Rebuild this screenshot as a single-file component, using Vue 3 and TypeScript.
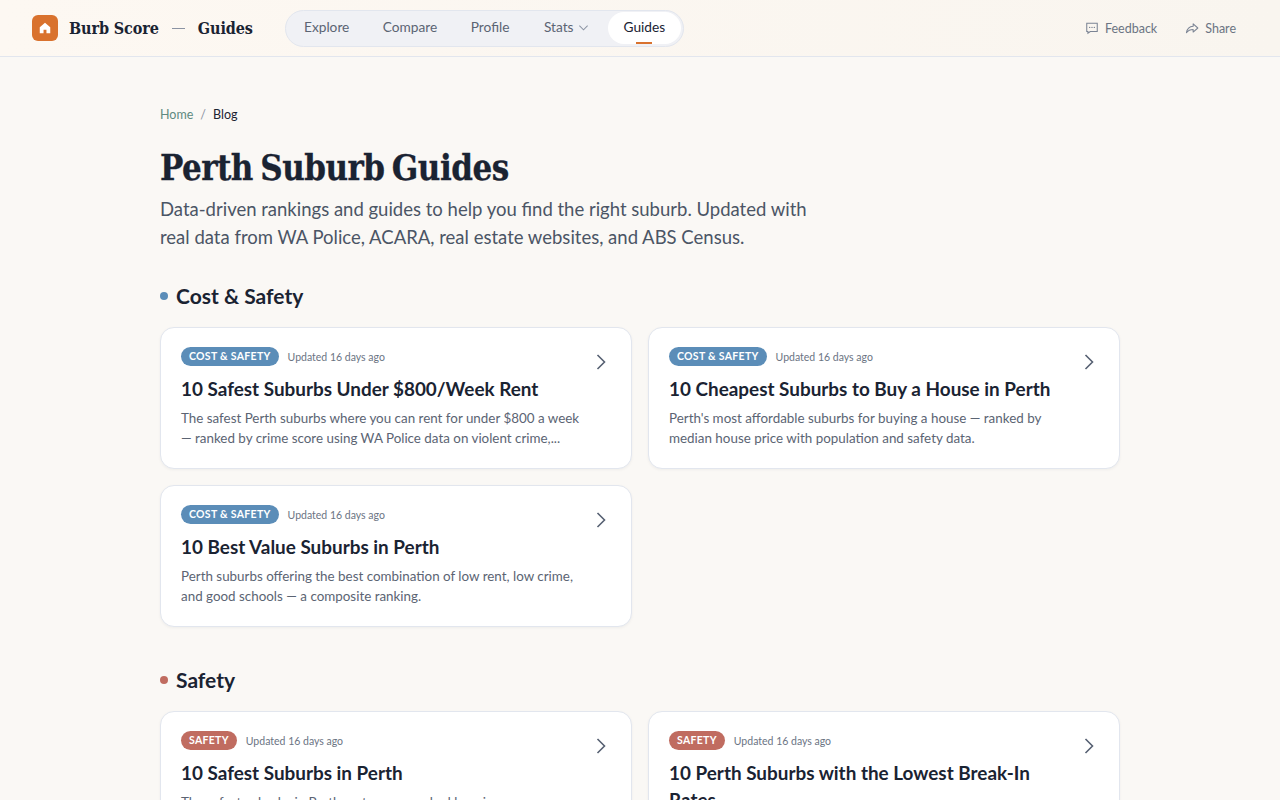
<script setup lang="ts">
interface Guide {
  tag: string;
  title: string;
  text: string;
}

interface Section {
  name: string;
  color: string;
  guides: Guide[];
}

const navItems = ['Explore', 'Compare', 'Profile'];

const sections: Section[] = [
  {
    name: 'Cost & Safety',
    color: '#5b8db8',
    guides: [
      {
        tag: 'COST & SAFETY',
        title: '10 Safest Suburbs Under $800/Week Rent',
        text: 'The safest Perth suburbs where you can rent for under $800 a week — ranked by crime score using WA Police data on violent crime,...',
      },
      {
        tag: 'COST & SAFETY',
        title: '10 Cheapest Suburbs to Buy a House in Perth',
        text: "Perth's most affordable suburbs for buying a house — ranked by median house price with population and safety data.",
      },
      {
        tag: 'COST & SAFETY',
        title: '10 Best Value Suburbs in Perth',
        text: 'Perth suburbs offering the best combination of low rent, low crime, and good schools — a composite ranking.',
      },
    ],
  },
  {
    name: 'Safety',
    color: '#c06c60',
    guides: [
      {
        tag: 'SAFETY',
        title: '10 Safest Suburbs in Perth',
        text: 'The safest suburbs in Perth metro area ranked by crime score — a composite of violent, property and other offences.',
      },
      {
        tag: 'SAFETY',
        title: '10 Perth Suburbs with the Lowest Break-In Rates',
        text: 'Perth suburbs with the fewest burglaries per head of population, using the latest WA Police data.',
      },
    ],
  },
];
</script>

<template>
  <div class="page">
    <header class="topbar">
      <div class="brand">
        <span class="logo">
          <svg width="14" height="14" viewBox="0 0 24 24" fill="#fff">
            <path d="M12 3 3 10.500V21h6.500v-6h5v6H21V10.500z" />
          </svg>
        </span>
        <span class="brand-name">Burb Score</span>
        <span class="brand-dash"></span>
        <span class="brand-name">Guides</span>
      </div>

      <nav class="nav">
        <a v-for="item in navItems" :key="item" class="nav-item">{{ item }}</a>
        <a class="nav-item stats">
          Stats
          <svg width="11" height="11" viewBox="0 0 12 12" fill="none" stroke="#8b93a3" stroke-width="1.1">
            <path d="M1.500 4 6 8.500 10.500 4" />
          </svg>
        </a>
        <a class="nav-item active">Guides</a>
      </nav>

      <div class="actions">
        <a class="action">
          <svg width="14" height="14" viewBox="0 0 24 24" fill="none" stroke="#7b8494" stroke-width="1.8">
            <path d="M3 4h18v14H9l-4 3v-3H3z" />
            <path d="M8 11h.01M12 11h.01M16 11h.01" stroke-width="2.400" stroke-linecap="round" />
          </svg>
          Feedback
        </a>
        <a class="action">
          <svg width="14" height="14" viewBox="0 0 24 24" fill="none" stroke="#7b8494" stroke-width="1.8" stroke-linejoin="round">
            <path d="M14 5v4C7 9.500 3.500 13.500 2.500 20c3-4 6.500-5.500 11.500-5.500V19l8-7z" />
          </svg>
          Share
        </a>
      </div>
    </header>

    <main class="content">
      <div class="crumbs">
        <a class="crumb-link">Home</a>
        <span class="crumb-sep">/</span>
        <span class="crumb-current">Blog</span>
      </div>

      <h1>Perth Suburb Guides</h1>
      <p class="lead">
        Data-driven rankings and guides to help you find the right suburb. Updated with
        real data from WA Police, ACARA, real estate websites, and ABS Census.
      </p>

      <section v-for="section in sections" :key="section.name" class="section">
        <h2>
          <span class="dot" :style="{ background: section.color }"></span>
          {{ section.name }}
        </h2>
        <div class="grid">
          <article v-for="guide in section.guides" :key="guide.title" class="card">
            <div class="card-body">
              <div class="meta">
                <span class="tag" :style="{ background: section.color }">{{ guide.tag }}</span>
                <span class="updated">Updated 16 days ago</span>
              </div>
              <h3>{{ guide.title }}</h3>
              <p class="excerpt">{{ guide.text }}</p>
            </div>
            <svg class="chevron" width="20" height="20" viewBox="0 0 20 20" fill="none" stroke="#566072" stroke-width="1.6">
              <path d="m6.500 3 7 7-7 7" />
            </svg>
          </article>
        </div>
      </section>
    </main>
  </div>
</template>

<style scoped>
.page {
  min-height: 100vh;
  background: #faf8f5;
  font-family: 'Lato', sans-serif;
  color: #1a2332;
}

.topbar {
  height: 56px;
  display: flex;
  align-items: center;
  padding: 0 32px;
  background: linear-gradient(90deg, #fdf8f2, #f9f5ef);
  border-bottom: 1px solid #e2e6ee;
}

.brand {
  display: flex;
  align-items: center;
  width: 253px;
  flex: none;
}

.logo {
  width: 26px;
  height: 26px;
  border-radius: 6px;
  background: #d9722e;
  display: flex;
  align-items: center;
  justify-content: center;
  margin-right: 11px;
}

.brand-name {
  font-family: 'DejaVu Serif Condensed', 'DejaVu Serif', serif;
  font-weight: 700;
  font-size: 16px;
  letter-spacing: -0.1px;
}

.brand-dash {
  width: 13px;
  height: 1px;
  background: #8b93a3;
  margin: 0 13px;
}

.nav {
  display: flex;
  align-items: center;
  gap: 1.500px;
  height: 37px;
  box-sizing: border-box;
  padding: 2px;
  background: #f0f1f5;
  border: 1px solid #e2e6ee;
  border-radius: 19px;
}

.nav-item {
  font-size: 13.700px;
  color: #5b6473;
  padding: 0 16px 2px;
  line-height: 30px;
}

.stats {
  display: flex;
  align-items: center;
  gap: 4px;
  margin-left: 1px;
}

.active {
  position: relative;
  color: #1a2332;
  background: #fff;
  border-radius: 16px;
  margin-left: 1.500px;
}

.active::after {
  content: '';
  position: absolute;
  left: 50%;
  bottom: 0;
  width: 16px;
  height: 2px;
  margin-left: -8px;
  background: #d9722e;
}

.actions {
  margin-left: auto;
  display: flex;
  gap: 28px;
  padding-right: 12px;
}

.action {
  display: flex;
  align-items: center;
  gap: 6px;
  font-size: 12.500px;
  color: #6b7483;
}

.content {
  width: 960px;
  margin: 0 auto;
  padding-top: 50px;
}

.crumbs {
  display: flex;
  gap: 7px;
  font-size: 12.500px;
  line-height: 16px;
}

.crumb-link {
  color: #5e8a80;
}

.crumb-sep {
  color: #8b93a3;
}

h1 {
  margin: 22px 0 0;
  font-family: 'DejaVu Serif Condensed', 'DejaVu Serif', serif;
  font-weight: 700;
  font-size: 34.500px;
  line-height: 46px;
  letter-spacing: -0.5px;
  word-spacing: -3px;
  -webkit-text-stroke: 0.3px #1a2332;
}

.lead {
  margin: 4px 0 0;
  width: 670px;
  font-size: 18.500px;
  line-height: 28px;
  color: #4b5565;
}

.section {
  margin-top: 29px;
  margin-bottom: 37px;
}

h2 {
  display: flex;
  align-items: center;
  gap: 8px;
  margin: 0 0 16px;
  font-size: 21px;
  line-height: 31px;
  font-weight: 700;
}

.dot {
  width: 8px;
  height: 8px;
  margin-top: 1px;
  border-radius: 50%;
}

.grid {
  display: grid;
  grid-template-columns: 1fr 1fr;
  gap: 16px;
  align-items: start;
}

.card {
  display: flex;
  justify-content: space-between;
  box-sizing: border-box;
  padding: 19px 20px 20px;
  background: #fff;
  border: 1px solid #e2e6ee;
  border-radius: 14px;
  box-shadow: 0 1px 3px rgba(26, 35, 50, 0.05);
}

.card-body {
  width: 400px;
}

.meta {
  display: flex;
  align-items: center;
  gap: 9px;
}

.tag {
  padding: 0 8px;
  border-radius: 10px;
  font-size: 10.500px;
  line-height: 19px;
  font-weight: 700;
  letter-spacing: 0.3px;
  color: #fff;
}

.updated {
  font-size: 10.500px;
  color: #6b7483;
}

h3 {
  margin: 9px 0 0;
  font-size: 18.900px;
  line-height: 27px;
  font-weight: 700;
}

.excerpt {
  margin: 6px 0 0;
  font-size: 13.400px;
  line-height: 20px;
  color: #5b6473;
}

.chevron {
  margin: 5px 0 0;
  flex: none;
}
</style>

<style>
html,
body {
  background: #faf8f5;
}
</style>
